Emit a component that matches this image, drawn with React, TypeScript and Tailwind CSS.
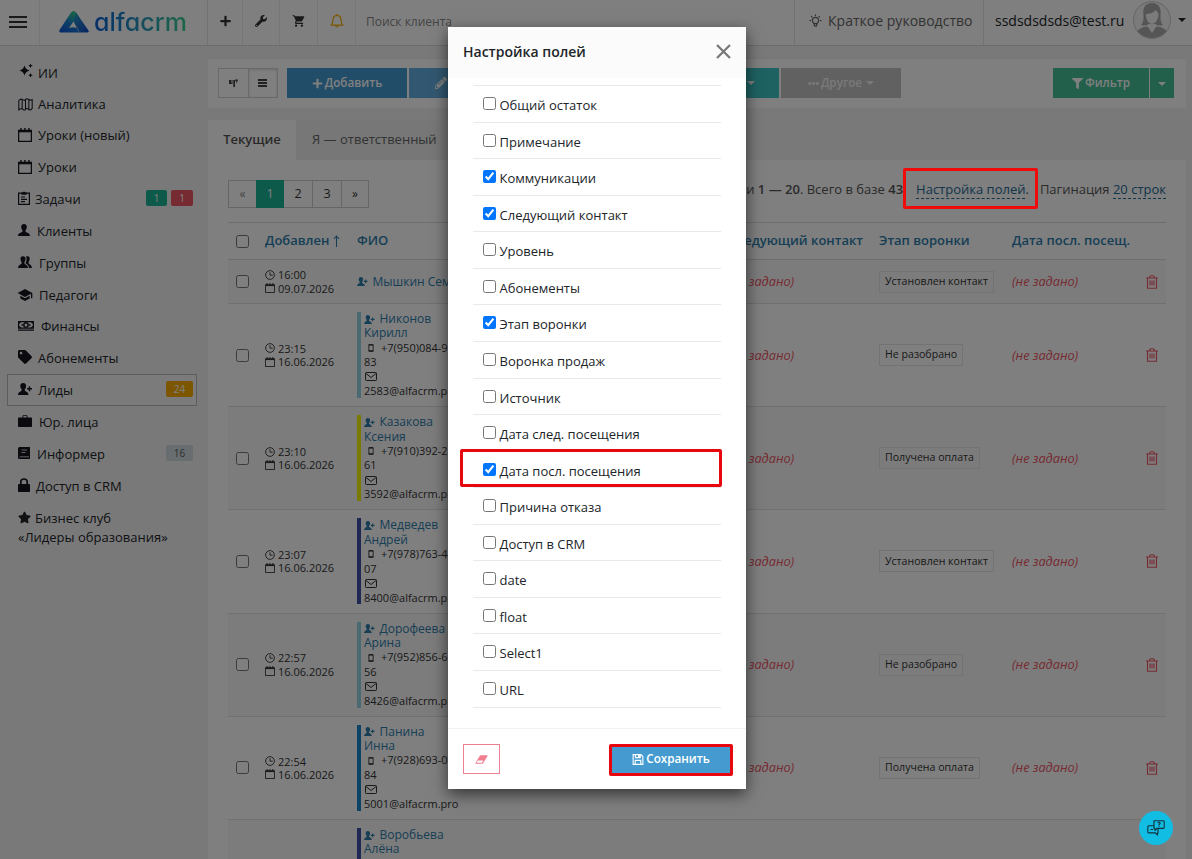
import React from "react";
import { FaPlus, FaWrench, FaFilter, FaPencilAlt, FaTag, FaStar, FaEllipsisH } from "react-icons/fa";
import { MdShoppingCart, MdSchool } from "react-icons/md";
import { TbBulb } from "react-icons/tb";

type IconProps = { className?: string };

const Sparkles = ({ className }: IconProps) => (
  <svg viewBox="0 0 16 16" className={className} fill="currentColor">
    <path d="M6.500 2.500Q7.500 6.500 11.500 7.500Q7.500 8.500 6.500 12.500Q5.500 8.500 1.500 7.500Q5.500 6.500 6.500 2.500Z" />
    <path d="M12.500 .5L13.200 2L14.800 2.700L13.200 3.400L12.500 5L11.800 3.400L10.300 2.700L11.800 2ZM12.500 10L13.200 11.500L14.800 12.200L13.200 12.900L12.500 14.500L11.800 12.900L10.300 12.200L11.800 11.500Z" />
  </svg>
);
const MapIcon = ({ className }: IconProps) => (
  <svg viewBox="0 0 16 14" className={className} fill="none" stroke="currentColor" strokeWidth="1.1">
    <path d="M0.8 2.8Q3 .2 5 1.8Q6.800 3 8 1.800Q9.200 .2 11 1.300Q13 3 15.200 1.800V11.200Q13 14 11 12Q9.200 10.800 8 12Q6.800 14 5 12Q3 10.800 .8 12.800ZM4.400 1.500V11.600M8 1.800V12M11.600 1.800V12.300" />
  </svg>
);
const CalIcon = ({ className }: IconProps) => (
  <svg viewBox="0 0 14 14" className={className} fill="none" stroke="currentColor" strokeWidth="1.300">
    <path d="M.6 2.500H13.400V13.400H.6Z" />
    <path d="M.6 3.300H13.400" strokeWidth="2" />
    <path d="M3 0V3M6.900 0V2.500M11 0V3" strokeWidth="1.400" />
  </svg>
);
const ClipIcon = ({ className }: IconProps) => (
  <svg viewBox="0 0 12 14" className={className} fill="none" stroke="currentColor" strokeWidth="1.200">
    <path d="M.6 2.200H11.400V13.400H.6ZM3 6H7M3 8.300H9M3 10.600H7" />
    <path d="M3.500 1.500H5Q6-.5 7 1.500H8.500V3.800H3.500Z" fill="currentColor" stroke="none" />
  </svg>
);
const Person = ({ className }: IconProps) => (
  <svg viewBox="0 0 12 12" className={className} fill="currentColor">
    <path d="M6 0C8 0 9 1.300 8.800 3.200C8.700 4.800 8 5.600 7.500 6.300V7.600C8 8.600 11.800 8.800 12 12H0C.2 8.800 4 8.600 4.500 7.600V6.300C4 5.600 3.300 4.800 3.200 3.200C3 1.300 4 0 6 0Z" />
  </svg>
);
const People = ({ className }: IconProps) => (
  <svg viewBox="0 0 14 12" className={className} fill="currentColor">
    <path d="M5 0.300C6.800 .3 7.700 1.500 7.500 3.300C7.400 4.800 6.800 5.500 6.400 6.200V7.500C6.900 8.500 9.800 8.800 10 12H0C.2 8.800 3.100 8.500 3.600 7.500V6.200C3.200 5.500 2.600 4.800 2.500 3.300C2.300 1.500 3.200 .3 5 .3Z" />
    <path d="M8 .8C10.500-.5 12 1 11.600 3.200C11.500 4.600 11 5.400 10.600 6V7.200C11 8.500 13.800 8.500 14 12H11C10.800 9.700 9.600 8.500 7.700 7.500V6.500C8.600 5.200 9 2.500 8 .8Z" />
  </svg>
);
const PersonAdd = ({ className }: IconProps) => (
  <svg viewBox="0 0 14 12" className={className} fill="currentColor">
    <path d="M5.200 0C7.300 0 8.300 1.300 8.100 3.200C8 4.800 7.300 5.600 6.800 6.300V7.600C7.300 8.600 10.300 8.800 10.500 12H0C.2 8.800 3.100 8.600 3.600 7.600V6.300C3.100 5.600 2.400 4.800 2.300 3.200C2.100 1.300 3.100 0 5.200 0Z" />
    <path d="M10.800 3.300H12.200V5.100H14V6.500H12.200V8.300H10.800V6.500H9V5.100H10.800Z" />
  </svg>
);
const Money = ({ className }: IconProps) => (
  <svg viewBox="0 0 16 10" className={className} fill="none" stroke="currentColor">
    <path d="M.6 .6H15.400V7.200H.6ZM0 9.200H16" strokeWidth="1.200" />
    <circle cx="8" cy="3.900" r="2.200" strokeWidth="1.400" />
    <path d="M.6 2.500L3 .6M15.400 2.500L13 .6M.6 5.300L3 7.200M15.400 5.300L13 7.200M3.500 4H5M11 4H12.500" strokeWidth="1.300" />
  </svg>
);
const Briefcase = ({ className }: IconProps) => (
  <svg viewBox="0 0 14 12" className={className} fill="currentColor">
    <path d="M4.500 2.500V1Q4.500 .2 5.300 .2H8.700Q9.500 .2 9.500 1V2.500H13.200Q14 2.500 14 3.300V11.200Q14 12 13.200 12H.8Q0 12 0 11.200V3.300Q0 2.500 .8 2.500ZM5.400 2.500H8.600V1.100H5.400Z" />
  </svg>
);
const Informer = ({ className }: IconProps) => (
  <svg viewBox="0 0 12 12" className={className}>
    <path d="M1.500 0H12V12H1.500Q0 12 0 10.500V1.500Q0 0 1.500 0Z" fill="currentColor" />
    <path d="M3.500 3H9M3.500 5.500H7.500M1.500 9.800H11" stroke="#f3f3f4" strokeWidth=".8" />
  </svg>
);
const Lock = ({ className }: IconProps) => (
  <svg viewBox="0 0 12 14" className={className}>
    <path d="M2.800 7V4.200Q2.800 1 6 1T9.200 4.200V7" fill="none" stroke="currentColor" strokeWidth="1.700" />
    <rect x="0" y="6" width="12" height="8" rx=".8" fill="currentColor" />
  </svg>
);
const Clock = ({ className }: IconProps) => (
  <svg viewBox="0 0 11 11" className={className} fill="none" stroke="currentColor">
    <circle cx="5.500" cy="5.500" r="4.800" />
    <path d="M5.500 2.500V5.700H8.500" />
  </svg>
);
const Phone = ({ className }: IconProps) => (
  <svg viewBox="0 0 6 9" className={className} fill="none" stroke="currentColor">
    <path d="M.6 .8H5.400V8.200H.6Z" />
    <path d="M.5 1H5.500M.5 7.800H5.500" strokeWidth="1.500" />
  </svg>
);
const Mail = ({ className }: IconProps) => (
  <svg viewBox="0 0 12 9" className={className} fill="none" stroke="currentColor">
    <rect x=".5" y=".5" width="11" height="8" rx=".8" />
    <path d="M1 1.500L6 5.500L11 1.500" />
  </svg>
);
const Trash = ({ className }: IconProps) => (
  <svg viewBox="0 0 12 14" className={className} fill="none" stroke="currentColor" strokeWidth="1.100">
    <path d="M0 3H12M1.500 3V13.300H10.500V3M3.500 3Q3.500 .7 5 .7H7Q8.500 .7 8.500 3" />
    <path d="M4 5.500V10.500M6 5.500V10.500M8 5.500V10.500" />
  </svg>
);
const Bell = ({ className }: IconProps) => (
  <svg viewBox="0 0 14 14" className={className} fill="none" stroke="currentColor" strokeWidth="1.200">
    <path d="M1 11.200Q3 9.500 3 5.500Q3.200 1.500 7 1.300Q10.800 1.500 11 5.500Q11 9.500 13 11.200Z" strokeLinejoin="round" />
    <path d="M5.300 11.500Q7 14.500 8.700 11.500M7 0V1.300" />
  </svg>
);
const Kanban = ({ className }: IconProps) => (
  <svg viewBox="0 0 9 8" className={className} fill="currentColor">
    <path d="M0 1H2V5H0ZM2.500 1H3.500V5H2.500ZM0 4H3.500V5H0ZM4.300 1H6V8H4.300ZM6 .5H9V1.800H6ZM7 1H8.200V3.500H7Z" />
  </svg>
);
const Bars = ({ className }: IconProps) => (
  <svg viewBox="0 0 9 9" className={className} fill="currentColor">
    <path d="M0 0H9V2H0ZM0 3H9V5H0ZM0 6H9V8H0Z" />
  </svg>
);
const Save = ({ className }: IconProps) => (
  <svg viewBox="0 0 12 12" className={className} fill="none" stroke="currentColor" strokeWidth="1.200">
    <path d="M.7 .7H9.200L11.300 2.800V11.300H.7ZM3 11V7H9V11" />
    <path d="M3.200 .7V4H8.500V.7" />
    <path d="M6 1H8V3.500H6Z" fill="currentColor" stroke="none" />
  </svg>
);
const Eraser = ({ className }: IconProps) => (
  <svg viewBox="0 0 14 10" className={className} fill="currentColor">
    <path d="M6 .3H13.300Q14 .5 13.600 1.300L8.800 9.200Q8.500 9.700 7.800 9.700H.7Q-.1 9.500 .4 8.600L5 1Q5.400 .3 6 .3ZM2.900 6L1.400 8.700H7.500L9.100 6Z" />
  </svg>
);
const Caret = ({ className }: IconProps) => (
  <svg viewBox="0 0 8 4" className={className} fill="currentColor">
    <path d="M0 0H8L4 4Z" />
  </svg>
);
const ChatIcon = ({ className }: IconProps) => (
  <svg viewBox="0 0 18 16" className={className} fill="none" stroke="currentColor" strokeWidth="1.100" strokeLinejoin="round">
    <path d="M7 .8H16.300Q17.200 .8 17.200 1.700V7.500Q17.200 8.400 16.300 8.400H10L8 10.500V8.400H7Z" />
    <path d="M7 5.800H1.800Q.8 5.800 .8 6.800V12Q.8 12.900 1.800 12.900H8.500L10.500 15V12.900H11V8.500M3.500 9.500H6" />
    <path d="M10.700 3.200Q12 1.500 13.200 3Q13.300 4 12 4.600V5.500M12 6.300V7.100" />
  </svg>
);

const Logo = () => (
  <svg viewBox="0 0 30 22" className="h-[22px] w-[30px]">
    <defs>
      <linearGradient id="lg" x1="0" y1="1" x2="0.5" y2="0">
        <stop offset="0" stopColor="#0f52d6" />
        <stop offset=".55" stopColor="#1b7fd0" />
        <stop offset="1" stopColor="#2fc48d" />
      </linearGradient>
      <linearGradient id="lg2" x1="0" y1="0" x2="1" y2="1">
        <stop offset="0" stopColor="#2a9fc0" />
        <stop offset="1" stopColor="#1346c8" />
      </linearGradient>
    </defs>
    <path d="M12 1.500Q14.500-1.500 17 1.500L21 7.500L14.500 10.500L10 17Q14 15.300 18 17L20 21.500H2Q-.5 21.500 .5 19Z" fill="url(#lg)" />
    <path d="M14.500 10.500L17 1.500L29.500 19.500Q30.500 21.500 28 21.500H20Q20 18.500 18 17Z" fill="url(#lg2)" />
  </svg>
);

type MenuItem = {
  label: string;
  icon: React.ReactNode;
  h: string;
  gap: string;
  active?: boolean;
  badges?: { t: string; c: string }[];
};
const menu: MenuItem[] = [
  { label: "ИИ", icon: <Sparkles className="mb-1.5 h-4 w-4" />, h: "h-8", gap: "gap-1" },
  { label: "Аналитика", icon: <MapIcon className="mb-0.5 h-[13px] w-[15px]" />, h: "h-[31px]", gap: "gap-[5px]" },
  { label: "Уроки (новый)", icon: <CalIcon className="mb-0.5 h-[14px] w-[14px]" />, h: "h-[31px]", gap: "gap-1.5" },
  { label: "Уроки", icon: <CalIcon className="mb-0.5 h-[14px] w-[14px]" />, h: "h-8", gap: "gap-1.5" },
  {
    label: "Задачи",
    icon: <ClipIcon className="mb-1 h-[14px] w-[12px]" />,
    h: "h-8",
    gap: "gap-[5px]",
    badges: [
      { t: "1", c: "bg-[#1ab394] text-white w-[21px]" },
      { t: "1", c: "bg-[#ed5565] text-white w-[22px]" },
    ],
  },
  { label: "Клиенты", icon: <Person className="mb-[3px] h-3 w-3" />, h: "h-8", gap: "gap-[7px]" },
  { label: "Группы", icon: <People className="mb-[3px] h-3 w-[14px]" />, h: "h-8", gap: "gap-[7px]" },
  { label: "Педагоги", icon: <MdSchool className="mb-0.5 -ml-px h-4 w-4" />, h: "h-8", gap: "gap-1.5" },
  { label: "Финансы", icon: <Money className="mb-[3px] h-[10px] w-4" />, h: "h-[31px]", gap: "gap-[7px]" },
  { label: "Абонементы", icon: <FaTag className="mb-1 h-[14px] w-[14px]" />, h: "h-8", gap: "gap-1.5" },
  {
    label: "Лиды",
    icon: <PersonAdd className="mb-1 h-3 w-[14px]" />,
    h: "h-8",
    gap: "gap-1.5",
    active: true,
    badges: [{ t: "24", c: "bg-[#f8ac00] text-white w-[27px]" }],
  },
  { label: "Юр. лица", icon: <Briefcase className="mb-[3px] h-3 w-[14px]" />, h: "h-8", gap: "gap-[7px]" },
  {
    label: "Информер",
    icon: <Informer className="mb-[3px] h-3 w-3" />,
    h: "h-8",
    gap: "gap-[7px]",
    badges: [{ t: "16", c: "bg-[#d1dade] text-[#5e5e5e] w-[27px]" }],
  },
  { label: "Доступ в CRM", icon: <Lock className="mb-[3px] h-[14px] w-3" />, h: "h-8", gap: "gap-1.5" },
];

const Sidebar = () => (
  <aside className="w-[208px] shrink-0 pt-[11px] pl-[7px] text-[13px] text-[#212529]">
    {menu.map((m) => (
      <div
        key={m.label}
        className={
          "flex w-[190px] items-center border pt-px pr-[3px] pl-2.5 " +
          m.h + " " + m.gap + " " +
          (m.active ? "border-[#bbb] bg-[#f6f6f6]" : "border-transparent")
        }
      >
        <span className="text-[#15151f]">{m.icon}</span>
        <span className="flex-1">{m.label}</span>
        <span className="mb-[3px] flex gap-1">
          {m.badges?.map((b, i) => (
            <span key={i} className={"flex h-4 items-center justify-center rounded-[2px] text-[10px] " + b.c}>
              {b.t}
            </span>
          ))}
        </span>
      </div>
    ))}
    <div className="mt-[7px] pl-[11px] leading-[19px]">
      <FaStar className="-mt-1 mr-1 inline h-[13px] w-[13px]" />
      Бизнес клуб
      <br />
      «Лидеры образования»
    </div>
  </aside>
);

const Header = () => (
  <header className="flex h-[46px] border-b border-[#d8d8d8] bg-white text-[#333]">
    <div className="flex w-10 items-center border-r border-[#ececec] pb-0.5 pl-[9px]">
      <div className="flex w-[18px] flex-col gap-[3px]">
        <div className="h-0.5 bg-[#333]" />
        <div className="h-0.5 bg-[#333]" />
        <div className="h-0.5 bg-[#333]" />
      </div>
    </div>
    <div className="flex w-[168px] items-center gap-[5px] border-r border-[#e4e4e4] pb-0.5 pl-[19px]">
      <Logo />
      <span className="bg-gradient-to-r from-[#0f5fd2] via-[#2b95bf] to-[#3bcf8a] bg-clip-text font-['Inter'] text-[25px] leading-[30px] font-medium tracking-[0.05px] text-transparent [font-feature-settings:'cv11']">
        alfacrm
      </span>
    </div>
    <div className="flex w-[35px] items-center justify-center border-r border-[#ececec] pb-1">
      <FaPlus className="h-[12px] w-[13px]" />
    </div>
    <div className="flex w-[37px] items-center justify-center border-r border-[#ececec] pb-1">
      <FaWrench className="h-3 w-3" />
    </div>
    <div className="flex w-[38px] items-center justify-center border-r border-[#ececec] pb-1">
      <MdShoppingCart className="h-[14px] w-[14px]" />
    </div>
    <div className="flex w-[38px] items-center justify-center border-r border-[#ececec] pb-1 text-[#f8ac00]">
      <Bell className="h-[14px] w-[14px]" />
    </div>
    <div className="flex-1 pt-[11px] pl-[10px] text-[12px] leading-[22px] text-[#888]">Поиск клиента</div>
    <div className="flex w-[190px] items-center gap-[5px] border-x border-[#e4e4e4] pb-1 pl-[13px] text-[14px] text-[#666]">
      <TbBulb className="h-[15px] w-[15px]" />
      <span className="tracking-[0.02px]">Краткое руководство</span>
    </div>
    <div className="flex w-[208px] items-center pb-[5px] pl-[11px] text-[14px] text-[#212529]">
      <span className="w-[138px]">ssdsdsdsds@test.ru</span>
      <svg viewBox="0 0 38 38" className="h-[38px] w-[38px]">
        <circle cx="19" cy="19" r="18.500" fill="#f6f6f6" stroke="#c8c8c8" />
        <path d="M19 2C12 2 9.500 7 10.500 14C10.800 19 10 22 8 24Q14 25.500 15.500 23H22.500Q24 25.500 30 24C28 22 27.200 19 27.500 14C28.500 7 26 2 19 2Z" fill="#aaa" />
        <path d="M13 13Q19 13 23 9Q25 12 25.500 13C25.500 19 22 23 19 23S12.500 19 13 13Z" fill="#f6f6f6" />
        <path d="M4.500 30Q7 26 14.500 25.500L19 32L23.500 25.500Q31 26 33.500 30Q28 37 19 37T4.500 30Z" fill="#aaa" />
      </svg>
      <Caret className="ml-[7px] h-1 w-2" />
    </div>
  </header>
);

const Toolbar = () => (
  <div className="flex h-[50px] w-[978px] items-start border-t border-[#e7eaec] bg-white pt-[9px] pr-3 pl-[10px] text-[11.700px] font-semibold text-white">
    <div className="flex h-[30px] w-[60px] border border-[#d2d2d2] text-[#444]">
      <div className="flex flex-1 items-center justify-center">
        <Kanban className="h-[8px] w-[9px]" />
      </div>
      <div className="flex flex-1 items-center justify-center border-l border-[#d2d2d2] shadow-[inset_0_1px_3px_rgba(0,0,0,0.15)]">
        <Bars className="h-[9px] w-[9px]" />
      </div>
    </div>
    <div className="ml-[9px] flex h-[30px] w-[120px] items-center justify-center gap-0.5 bg-[#459bd0]">
      <FaPlus className="h-[11px] w-[11px]" />
      Добавить
    </div>
    <div className="ml-0.5 flex h-[30px] w-[160px] items-center bg-[#64b0e2] pl-[26px]">
      <FaPencilAlt className="h-3 w-3" />
    </div>
    <div className="ml-0.5 flex h-[30px] w-[208px] items-center justify-end bg-[#3fc5c5] pr-[24px]">
      <Caret className="h-1 w-2" />
    </div>
    <div className="ml-0.5 flex h-[30px] w-[120px] items-center justify-center gap-0.5 bg-[#c2c2c2] text-[#f3f3f3]">
      <FaEllipsisH className="h-[11px] w-[11px]" />
      Другое
      <Caret className="ml-[2px] h-1 w-2" />
    </div>
    <div className="ml-auto flex h-[30px] w-24 items-center justify-center gap-0.5 bg-[#45c096]">
      <FaFilter className="h-[11px] w-[11px]" />
      Фильтр
    </div>
    <div className="ml-px flex h-[30px] w-6 items-center justify-center bg-[#45c096]">
      <Caret className="mt-0.5 h-1 w-2" />
    </div>
  </div>
);

const cols = "grid grid-cols-[36px_93px_371px_151px_133px_134px_20px]";

type Lead = { time: string; name1: string; name2: string; phone: string; tail: string; mail: string; stage: string; bar: string; shade: string };
const leads: Lead[] = [
  { time: "23:15", name1: "Никонов", name2: "Кирилл", phone: "+7(950)084-9", tail: "83", mail: "2583@alfacrm.pro", stage: "Не разобрано", bar: "border-[#94d2e2]", shade: "bg-white" },
  { time: "23:10", name1: "Казакова", name2: "Ксения", phone: "+7(910)392-2", tail: "61", mail: "3592@alfacrm.pro", stage: "Получена оплата", bar: "border-[#f5f500]", shade: "bg-[#f9f9f9]" },
  { time: "23:07", name1: "Медведев", name2: "Андрей", phone: "+7(978)763-4", tail: "07", mail: "8400@alfacrm.pro", stage: "Установлен контакт", bar: "border-[#3f51a5]", shade: "bg-white" },
  { time: "22:57", name1: "Дорофеева", name2: "Арина", phone: "+7(952)856-6", tail: "56", mail: "8426@alfacrm.pro", stage: "Не разобрано", bar: "border-[#94d2e2]", shade: "bg-[#f9f9f9]" },
  { time: "22:54", name1: "Панина", name2: "Инна", phone: "+7(928)693-0", tail: "84", mail: "5001@alfacrm.pro", stage: "Получена оплата", bar: "border-[#1684cc]", shade: "bg-white" },
];

const Check = ({ checked = false, className = "" }: { checked?: boolean; className?: string }) => (
  <input type="checkbox" checked={checked} readOnly className={"block h-[13px] w-[13px] shrink-0 " + className} />
);

const DateCell = ({ time, date }: { time: string; date: string }) => (
  <div className="pl-px text-[11px] leading-[13.3px]">
    <div className="flex items-center gap-[3px]">
      <Clock className="h-[10px] w-[10px]" />
      {time}
    </div>
    <div className="flex items-center gap-[3px]">
      <CalIcon className="h-[10px] w-[10px]" />
      {date}
    </div>
  </div>
);

const NotSet = () => <span className="text-[12.700px] text-[#ed5565] italic">(не задано)</span>;
const Stage = ({ text }: { text: string }) => (
  <span className="flex h-[22px] w-fit items-center border border-[#e7e7e7] px-[5px] text-[10.600px] whitespace-nowrap">{text}</span>
);
const LeadName = ({ first, second }: { first: string; second: string }) => (
  <div className="text-[12px] leading-[14.3px] text-[#2d7cab]">
    <div className="flex items-center gap-[5px]">
      <PersonAdd className="h-[9px] w-[10.5px]" />
      {first}
    </div>
    <div>{second}</div>
  </div>
);

const Table = () => (
  <div className="w-[938px] text-[#333]">
    <div className={cols + " h-[38px] items-center border-y border-[#ddd] text-[13px] font-semibold text-[#2d7cab]"}>
      <Check className="ml-2" />
      <span className="flex items-center gap-1 pl-px whitespace-nowrap">
        Добавлен
        <svg viewBox="0 0 7 12" className="h-3 w-[7px]" fill="none" stroke="currentColor" strokeWidth="1.100">
          <path d="M3.500 12V1M.8 4L3.500 1L6.200 4" />
        </svg>
      </span>
      <span>ФИО</span>
      <span>Следующий контакт</span>
      <span>Этап воронки</span>
      <span className="whitespace-nowrap">Дата посл. посещ.</span>
    </div>
    <div className={cols + " h-[44px] items-center border-b border-[#e0e0e0] bg-[#f9f9f9]"}>
      <Check className="ml-2" />
      <DateCell time="16:00" date="09.07.2026" />
      <span className="flex items-center gap-[5px] text-[12px] text-[#2d7cab]">
        <PersonAdd className="h-[9px] w-[10.5px]" />
        Мышкин Семён
      </span>
      <NotSet />
      <Stage text="Установлен контакт" />
      <NotSet />
      <Trash className="h-[14px] w-3 text-[#ed5565]" />
    </div>
    {leads.map((l) => (
      <div key={l.name1} className={cols + " h-[103.2px] items-center border-b border-[#e0e0e0] " + l.shade}>
        <Check className="ml-2" />
        <DateCell time={l.time} date="16.06.2026" />
        <div className={"h-[86px] w-[110px] border-l-4 pl-[3px] text-[11px] leading-[14.5px] " + l.bar}>
          <LeadName first={l.name1} second={l.name2} />
          <div className="flex items-center gap-[7px] pl-1 whitespace-nowrap">
            <Phone className="h-2 w-[6px]" />
            {l.phone}
          </div>
          <div>{l.tail}</div>
          <div className="flex h-[14.5px] items-center pl-px">
            <Mail className="h-[9px] w-[12px]" />
          </div>
          <div>{l.mail}</div>
        </div>
        <NotSet />
        <Stage text={l.stage} />
        <NotSet />
        <Trash className="h-[14px] w-3 text-[#ed5565]" />
      </div>
    ))}
    <div className={cols + " h-[103.2px] bg-[#f9f9f9]"}>
      <div className="col-start-3 mt-2 h-[86px] border-l-4 border-[#3f51a5] pl-[3px]">
        <LeadName first="Воробьева" second="Алёна" />
      </div>
    </div>
  </div>
);

const Pager = () => (
  <div className="flex h-7 w-[141px] border border-[#ccc] text-[12.5px] text-[#333] [&>span]:flex [&>span]:items-center [&>span]:justify-center">
    <span className="w-[27px] text-[12px] text-[#888]">«</span>
    <span className="-my-px w-[28px] bg-[#1ab394] text-white">1</span>
    <span className="w-[29px] border-r border-[#ccc]">2</span>
    <span className="w-[29px] border-r border-[#ccc]">3</span>
    <span className="flex-1 text-[12px]">»</span>
  </div>
);

const fields: [string, boolean][] = [
  ["Общий остаток", false],
  ["Примечание", false],
  ["Коммуникации", true],
  ["Следующий контакт", true],
  ["Уровень", false],
  ["Абонементы", false],
  ["Этап воронки", true],
  ["Воронка продаж", false],
  ["Источник", false],
  ["Дата след. посещения", false],
  ["Дата посл. посещения", true],
  ["Причина отказа", false],
  ["Доступ в CRM", false],
  ["date", false],
  ["float", false],
  ["Select1", false],
  ["URL", false],
];

const Modal = () => (
  <div className="absolute top-[27px] left-[448px] flex h-[762px] w-[298px] flex-col bg-white text-[13px] text-[#212529] shadow-[0_5px_15px_rgba(0,0,0,0.6)]">
    <div className="flex h-[51px] shrink-0 items-center justify-between bg-[#fbfbfb] px-[15px] pb-0.5">
      <span className="text-[14px] font-semibold">Настройка полей</span>
      <svg viewBox="0 0 15 15" className="mb-px h-[15px] w-[15px]" stroke="#777" strokeWidth="2.200">
        <path d="M1 1L14 14M14 1L1 14" />
      </svg>
    </div>
    <div className="mx-[25px] mt-[7px] flex-1 border-t border-[#e7eaec]">
      {fields.map(([f, c]) => (
        <div key={f} className="flex h-[36.57px] gap-[3.5px] border-b border-[#e7eaec] pl-2.5">
          <Check checked={c} className="mt-[11px]" />
          <span className="mt-[9px] leading-5">{f}</span>
        </div>
      ))}
    </div>
    <div className="flex h-[61px] shrink-0 items-center justify-between border-t border-[#f3f3f3] pr-[13px] pl-[15px]">
      <div className="flex h-[30px] w-[37px] items-center justify-center border border-[#ed8090] text-[#f27f90]">
        <Eraser className="h-[9px] w-[13px]" />
      </div>
      <div className="mt-[2px] flex h-[32px] w-[124px] items-center justify-center gap-0.5 rounded-[2px] border-[3px] border-[#e8070f] bg-[#459bd0] pb-0.5 text-[11.700px] font-semibold text-white">
        <Save className="h-[11px] w-[12px]" />
        Сохранить
      </div>
    </div>
    <div className="absolute top-[422px] left-[12px] h-[38px] w-[262px] rounded-[2px] border-[3px] border-[#e8070f]" />
  </div>
);

export default function App() {
  return (
    <div className="relative flex h-[859px] w-[1192px] flex-col overflow-hidden bg-[#f3f3f4] font-['Open_Sans','Noto_Sans',sans-serif]">
      <Header />
      <div className="flex min-h-0 flex-1">
        <Sidebar />
        <main className="flex min-w-0 flex-1 flex-col pt-3">
          <Toolbar />
          <div className="mt-3 flex h-10 text-[13px] text-[#666]">
            <div className="flex w-[88px] items-center justify-center bg-white font-semibold text-[#555]">Текущие</div>
            <div className="flex w-[150px] items-center bg-[#efefef] pl-4 whitespace-nowrap">Я — ответственный</div>
          </div>
          <div className="min-h-0 w-[978px] flex-1 bg-white px-5 pt-5">
            <div className="flex h-[42px] items-start justify-between">
              <Pager />
              <div className="pt-px text-[13px] leading-[16px] whitespace-nowrap text-[#555]">
                Записи <b className="font-semibold">1 — 20</b>. Всего в базе <b className="font-semibold">43</b>
                <span className="ml-[13px] border-b border-dashed border-[#246a94] text-[#246a94]">Настройка полей</span>.
                <span className="ml-[11px]">Пагинация </span>
                <span className="border-b border-dashed border-[#246a94] text-[#246a94]">20 строк</span>
              </div>
            </div>
            <Table />
          </div>
        </main>
      </div>
      <div className="absolute inset-0 bg-black/50" />
      <div className="absolute top-[168px] left-[903px] h-[41px] w-[135px] rounded-[2px] border-[3px] border-[#f00a0a]" />
      <div className="absolute top-[811px] left-[1139px] flex h-[34px] w-[34px] items-center justify-center rounded-full bg-[#12bde3] text-[#10303c]">
        <ChatIcon className="h-4 w-[18px]" />
      </div>
      <Modal />
    </div>
  );
}
